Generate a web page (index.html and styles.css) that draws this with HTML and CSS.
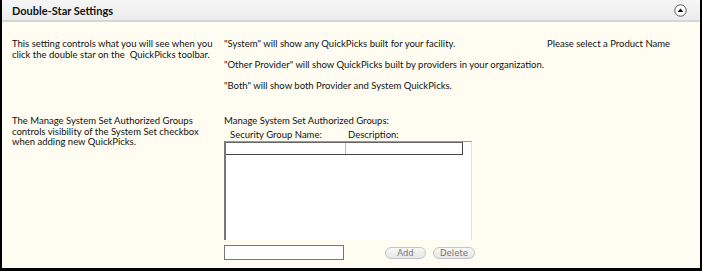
FILE: index.html
```html
<!DOCTYPE html>
<html>
<head>
<meta charset="utf-8">
<link rel="stylesheet" href="styles.css">
</head>
<body>
<div class="panel">
  <div class="header">
    <span class="title">Double-Star Settings</span>
    <span class="collapse">
      <svg width="13" height="13" viewBox="0 0 13 13"><circle cx="6.5" cy="6.5" r="5.7" fill="#fff" stroke="#555" stroke-width="1"/><path d="M3.6 8 L6.5 4.6 L9.4 8 Z" fill="#111"/></svg>
    </span>
  </div>
  <div class="body">
    <div class="row row1">
      <div class="col left">This setting controls what you will see when you click the double star on the &nbsp;QuickPicks toolbar.</div>
      <div class="col mid">
        <p>"System" will show any QuickPicks built for your facility.</p>
        <p>"Other Provider" will show QuickPicks built by providers in your organization.</p>
        <p>"Both" will show both Provider and System QuickPicks.</p>
      </div>
      <div class="col right">Please select a Product Name</div>
    </div>
    <div class="row row2">
      <div class="col left">The Manage System Set Authorized Groups controls visibility of the System Set checkbox when adding new QuickPicks.</div>
      <div class="col mid2">
        <div class="label">Manage System Set Authorized Groups:</div>
        <div class="colheads"><span class="ch1">Security Group Name:</span><span class="ch2">Description:</span></div>
        <div class="grid">
          <div class="gridhead"><div class="gc1"></div><div class="gc2"></div></div>
        </div>
        <div class="controls">
          <input class="textbox" type="text">
          <div class="buttons">
            <button class="btn">Add</button>
            <button class="btn">Delete</button>
          </div>
        </div>
      </div>
    </div>
  </div>
</div>
</body>
</html>
```
FILE: styles.css
```css
html, body {
  margin: 0;
  padding: 0;
  background: #fff;
}
body {
  font-family: Lato, "Liberation Sans", sans-serif;
  font-size: 9.5px;
  color: #111;
}
.panel {
  width: 702px;
  height: 271px;
  box-sizing: border-box;
  border-left: 2px solid #000;
  border-right: 2px solid #000;
  border-bottom: 3px solid #000;
  background: #fffdf1;
  display: flex;
  flex-direction: column;
}
.header {
  height: 20px;
  background: linear-gradient(#f6f6f6, #ececec);
  border-bottom: 2px solid #d6d6d6;
  display: flex;
  align-items: center;
  justify-content: space-between;
  padding: 0 13px 0 10px;
}
.title {
  font-weight: bold;
  font-size: 11px;
  color: #111;
}
.collapse {
  display: flex;
}
.body {
  flex: 1;
  padding-top: 17px;
}
.row {
  display: flex;
}
.col.left {
  width: 202px;
  margin-left: 10px;
  line-height: 10.5px;
}
.col.mid {
  width: 323px;
  margin-left: 10px;
}
.col.mid p {
  margin: 0 0 10.5px 0;
  line-height: 10.5px;
}
.col.right {
  line-height: 10.5px;
}
.row2 {
  margin-top: 14px;
}
.mid2 {
  margin-left: 10px;
  width: 250px;
  display: flex;
  flex-direction: column;
}
.label {
  line-height: 10.5px;
}
.colheads {
  display: flex;
  padding-left: 6px;
  margin-top: 2px;
  line-height: 11px;
}
.ch1 { width: 118px; }
.grid {
  width: 248px;
  height: 99px;
  background: #fff;
  border-top: 1px solid #9a9a9a;
  border-left: 2px solid #777;
  border-right: 1px solid #e2e2e2;
  box-sizing: border-box;
  margin-top: 1px;
}
.gridhead {
  display: flex;
  width: 237px;
  height: 13px;
  box-sizing: border-box;
  border: 1px solid #444;
  border-top-color: #666;
  border-left: none;
}
.gc1 {
  width: 119px;
  border-right: 1px solid #bbb;
}
.controls {
  display: flex;
  align-items: center;
  margin-top: 5px;
}
.textbox {
  width: 120px;
  height: 15px;
  box-sizing: border-box;
  border: 1px solid #777;
  background: #fff;
  margin: 0;
  padding: 0;
}
.buttons {
  display: flex;
  gap: 7px;
  margin-left: 41px;
  margin-top: 1px;
}
.btn {
  height: 12px;
  box-sizing: border-box;
  border: 1px solid #c4c4c4;
  border-radius: 7px;
  background: linear-gradient(#f8f8f8, #e6e6e6);
  font-family: "DejaVu Sans", sans-serif;
  font-size: 8.5px;
  color: #777;
  padding: 0;
  line-height: 10px;
}
.btn:first-child { width: 41px; }
.btn:last-child { width: 42px; }
```
